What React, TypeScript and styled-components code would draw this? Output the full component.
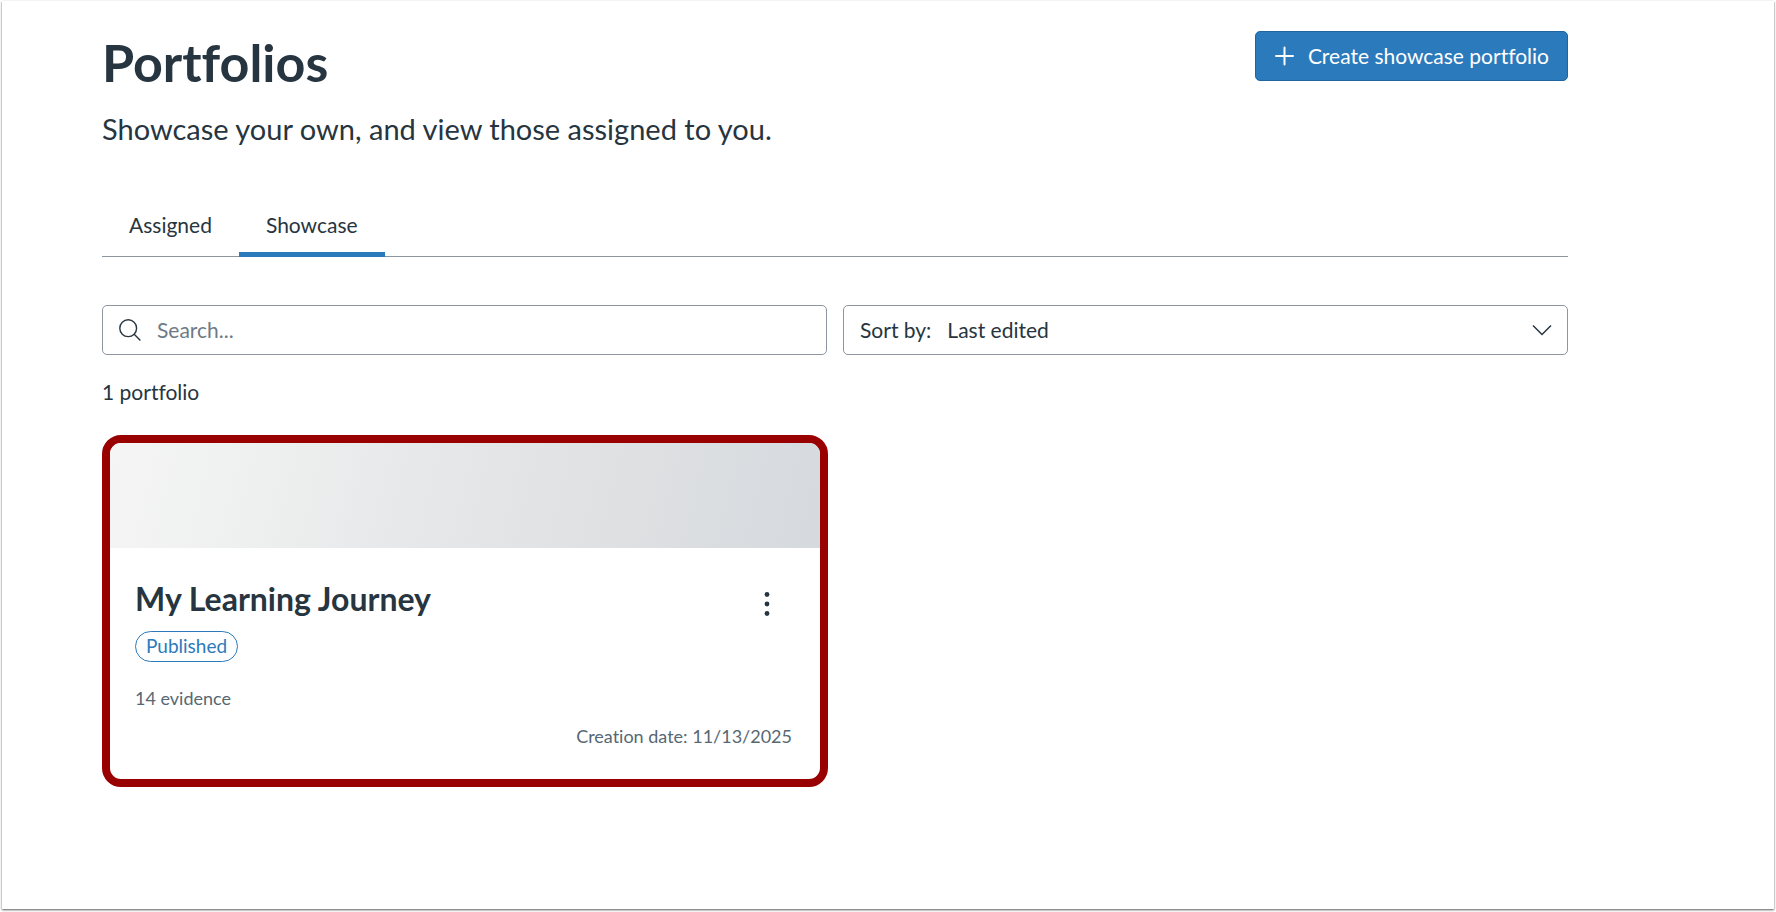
import React from "react";
import styled, { createGlobalStyle } from "styled-components";

const ink = "#273540";
const muted = "#576773";
const line = "#8d959f";
const blue = "#2b7abc";

const GlobalStyle = createGlobalStyle`
  *, *::before, *::after { box-sizing: border-box; }
  body {
    margin: 0;
    background: #fff;
    color: ${ink};
    font-family: Lato, "Liberation Sans", sans-serif;
    font-size: 21px;
    line-height: 26px;
    font-variant-ligatures: none;
  }
  h1, h2, p { margin: 0; }
  button, input, select { font: inherit; font-variant-ligatures: none; color: inherit; }
`;

const Shell = styled.div`
  padding: 1px 2px 3px;
`;

const Page = styled.main`
  min-height: calc(100vh - 4px);
  padding: 30px 206px 48px 100px;
  background: #fff;
  box-shadow: 0 1px 2px rgba(0, 0, 0, 0.65);
`;

const Header = styled.header`
  display: flex;
  justify-content: space-between;
  align-items: flex-start;
`;

const PageTitle = styled.h1`
  font-size: 52px;
  line-height: 62px;
  font-weight: 700;
`;

const Subtitle = styled.p`
  margin-top: 18px;
  font-size: 29px;
  line-height: 36px;
`;

const CreateButton = styled.button`
  display: flex;
  align-items: center;
  gap: 12px;
  height: 50px;
  padding: 0 18px;
  border: 1px solid #1f659f;
  border-radius: 5px;
  background: ${blue};
  color: #fff;
  cursor: pointer;
`;

const TabList = styled.div`
  display: flex;
  margin-top: 51px;
  box-shadow: inset 0 -1px 0 ${line};
`;

const Tab = styled.button<{ $active?: boolean }>`
  padding: 14px 27px;
  border: 0;
  border-bottom: 5px solid ${({ $active }) => ($active ? blue : "transparent")};
  background: none;
  cursor: pointer;
`;

const Filters = styled.div`
  display: grid;
  grid-template-columns: 1fr 1fr;
  gap: 16px;
  margin-top: 48px;
`;

const Field = styled.label`
  display: flex;
  align-items: center;
  gap: 16px;
  height: 50px;
  padding: 0 15px 0 16px;
  border: 1px solid ${line};
  border-radius: 5px;
`;

const SearchInput = styled.input`
  flex: 1;
  min-width: 0;
  padding: 0;
  border: 0;
  outline: 0;
  background: none;
  &::placeholder { color: #6e7b86; opacity: 1; }
`;

const SortSelect = styled.select`
  flex: 1;
  min-width: 0;
  padding: 0;
  border: 0;
  outline: 0;
  appearance: none;
  background: none;
`;

const Count = styled.p`
  margin-top: 24px;
`;

const CardGrid = styled.div`
  display: grid;
  grid-template-columns: 1fr 1fr;
  gap: 14px;
  margin-top: 30px;
`;

const Card = styled.article`
  overflow: hidden;
  border: 8px solid #990000;
  border-radius: 19px;
`;

const Banner = styled.div`
  height: 105px;
  background: linear-gradient(104deg, #f5f5f5 0%, #eceeed 28%, #e8eaec 36%, #e0e1e3 68%, #d5dade 100%);
`;

const CardBody = styled.div`
  display: flex;
  flex-direction: column;
  align-items: flex-start;
  padding: 31px 28px 31px 25px;
`;

const CardHeading = styled.div`
  display: flex;
  align-self: stretch;
  justify-content: space-between;
  align-items: flex-start;
`;

const CardTitle = styled.h2`
  font-size: 32px;
  line-height: 40px;
  font-weight: 700;
`;

const MenuButton = styled.button`
  display: grid;
  place-items: center;
  width: 50px;
  height: 50px;
  padding: 0;
  border: 0;
  background: none;
  cursor: pointer;
`;

const Pill = styled.span`
  margin-top: 2px;
  padding: 1px 10px 3px;
  border: 1px solid ${blue};
  border-radius: 16px;
  color: ${blue};
  font-size: 19px;
  line-height: 25px;
`;

const Meta = styled.p<{ $end?: boolean }>`
  align-self: ${({ $end }) => ($end ? "flex-end" : "flex-start")};
  margin-top: ${({ $end }) => ($end ? 14 : 24)}px;
  color: ${muted};
  font-size: 18px;
  line-height: 24px;
`;

const PlusIcon = () => (
  <svg width="22" height="20" viewBox="0 0 22 20" fill="none" stroke="currentColor" strokeWidth="2" strokeLinecap="round" aria-hidden="true">
    <path d="M2 10h17M10.500 1.500v17" />
  </svg>
);

const SearchIcon = () => (
  <svg width="22" height="22" viewBox="0 0 22 22" fill="none" stroke="currentColor" strokeWidth="1.400" aria-hidden="true">
    <circle cx="9.200" cy="9.200" r="8.400" />
    <path d="M15.200 15.200l6.200 6.200" />
  </svg>
);

const ChevronIcon = () => (
  <svg width="20" height="12" viewBox="0 0 20 12" fill="none" stroke="currentColor" strokeWidth="1.500" aria-hidden="true">
    <path d="M1 1.500l9 9 9-9" />
  </svg>
);

const MoreIcon = () => (
  <svg width="6" height="24" viewBox="0 0 6 24" fill="currentColor" aria-hidden="true">
    <circle cx="3" cy="2.500" r="2.400" />
    <circle cx="3" cy="12" r="2.400" />
    <circle cx="3" cy="21.500" r="2.400" />
  </svg>
);

export default function App() {
  return (
    <Shell>
      <GlobalStyle />
      <Page>
        <Header>
          <div>
            <PageTitle>Portfolios</PageTitle>
            <Subtitle>Showcase your own, and view those assigned to you.</Subtitle>
          </div>
          <CreateButton type="button">
            <PlusIcon />
            Create showcase portfolio
          </CreateButton>
        </Header>
        <TabList role="tablist">
          <Tab type="button" role="tab" aria-selected="false">Assigned</Tab>
          <Tab type="button" role="tab" aria-selected="true" $active>Showcase</Tab>
        </TabList>
        <Filters>
          <Field>
            <SearchIcon />
            <SearchInput type="text" placeholder="Search..." aria-label="Search" />
          </Field>
          <Field>
            <span>Sort by:</span>
            <SortSelect defaultValue="edited">
              <option value="edited">Last edited</option>
            </SortSelect>
            <ChevronIcon />
          </Field>
        </Filters>
        <Count>1 portfolio</Count>
        <CardGrid>
          <Card>
            <Banner />
            <CardBody>
              <CardHeading>
                <CardTitle>My Learning Journey</CardTitle>
                <MenuButton type="button" aria-label="Portfolio options">
                  <MoreIcon />
                </MenuButton>
              </CardHeading>
              <Pill>Published</Pill>
              <Meta>14 evidence</Meta>
              <Meta $end>Creation date: 11/13/2025</Meta>
            </CardBody>
          </Card>
        </CardGrid>
      </Page>
    </Shell>
  );
}
